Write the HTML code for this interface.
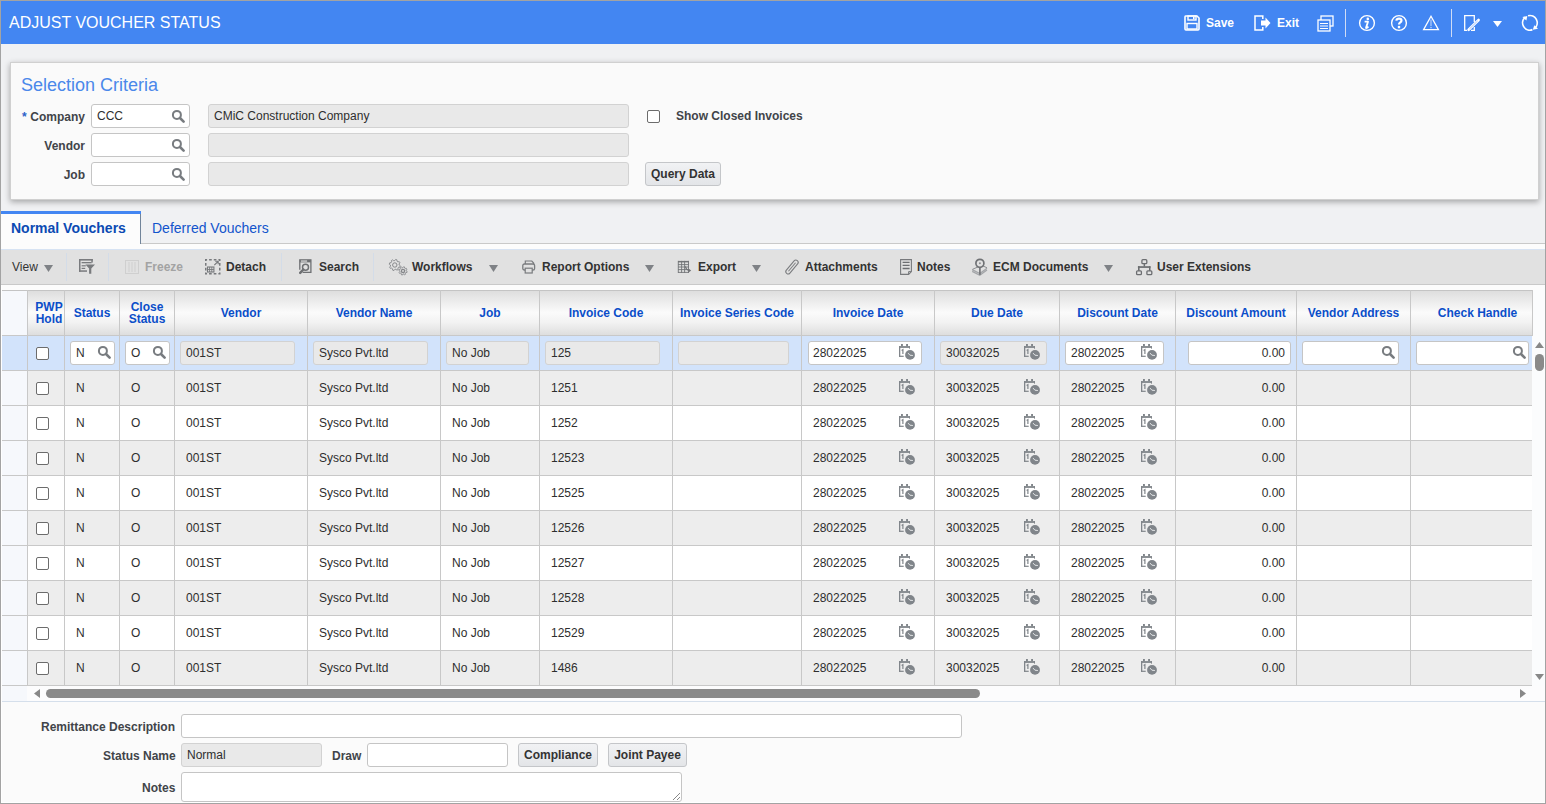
<!DOCTYPE html>
<html><head><meta charset="utf-8"><style>
*{box-sizing:border-box;margin:0;padding:0}
html,body{width:1546px;height:804px;overflow:hidden}
body{position:relative;background:#f0f1f3;font-family:"Liberation Sans",sans-serif;font-size:12px;color:#333}
div,span,svg{position:absolute}
.t{white-space:nowrap;line-height:14px}
.b{font-weight:bold}
.lbl{font-weight:bold;color:#414449;white-space:nowrap;line-height:14px}
.inp{background:#fff;border:1px solid #c5c5c5;border-radius:3px}
.ro{background:#e9e9e9;border:1px solid #d2d2d2;border-radius:3px}
.btn{background:linear-gradient(#f1f2f4,#e3e5e8);border:1px solid #c4c6c9;border-radius:3px;font-weight:bold;color:#333;text-align:center;white-space:nowrap}
.ht{font-weight:bold;color:#0b4ec9;text-align:center;line-height:14px;white-space:nowrap}
.cell{white-space:nowrap;line-height:14px;color:#2e2e2e}
</style></head><body>
<div style="left:0px;top:0px;width:1546px;height:1px;background:#a3a3a3"></div>
<div style="left:0px;top:0px;width:1px;height:804px;background:#a3a3a3"></div>
<div style="left:1545px;top:0px;width:1px;height:804px;background:#a3a3a3"></div>
<div style="left:0px;top:803px;width:1546px;height:1px;background:#a3a3a3"></div>
<div style="left:1px;top:1px;width:1544px;height:43px;background:#4386f2"></div>
<div class="t" style="left:9px;top:14px;font-size:16px;line-height:18px;color:#fff">ADJUST VOUCHER STATUS</div>
<svg style="left:1184px;top:15px" width="16" height="16" viewBox="0 0 16 16"><path d="M1.5 1 H13 L15 3 V14 Q15 15 14 15 H2 Q1 15 1 14 V2 Q1 1 1.5 1Z" fill="none" stroke="#fff" stroke-width="1.6"/><rect x="4" y="1" width="8" height="4" fill="none" stroke="#fff" stroke-width="1.4"/><rect x="9" y="2" width="1.6" height="2.2" fill="#fff"/><rect x="3" y="8.5" width="10" height="5.5" fill="none" stroke="#fff" stroke-width="1.4"/></svg>
<div class="t b" style="left:1206px;top:16px;font-size:12px;color:#fff">Save</div>
<svg style="left:1254px;top:15px" width="18" height="16" viewBox="0 0 18 16"><path d="M8.8 4 V1 H1 V15 H8.8 V12" fill="none" stroke="#fff" stroke-width="1.5"/><path d="M7 5.5 H11.5 V2.5 L16.5 8 L11.5 13.5 V10.5 H7Z" fill="#fff"/></svg>
<div class="t b" style="left:1277px;top:16px;font-size:12px;color:#fff">Exit</div>
<svg style="left:1317px;top:15px" width="17" height="17" viewBox="0 0 17 17"><rect x="4" y="1" width="12" height="10" fill="none" stroke="#fff" stroke-width="1.3"/><rect x="1" y="5" width="12" height="11" fill="#4386f2" stroke="#fff" stroke-width="1.3"/><path d="M3 8.5 H11 M3 11 H11 M3 13.5 H11" stroke="#fff" stroke-width="1.1"/></svg>
<div style="left:1345px;top:9px;width:1px;height:28px;background:#d0dcf5"></div>
<svg style="left:1358px;top:14px" width="18" height="18" viewBox="0 0 18 18"><circle cx="9" cy="9" r="7.4" fill="none" stroke="#fff" stroke-width="1.4"/><circle cx="9.8" cy="4.9" r="1.3" fill="#fff"/><path d="M6.6 7.7 H10 L8.1 13.6 Q7.9 14.3 8.6 14 L10.5 12.8" fill="none" stroke="#fff" stroke-width="1.8" stroke-linejoin="round"/></svg>
<svg style="left:1390px;top:14px" width="18" height="18" viewBox="0 0 18 18"><circle cx="9" cy="9" r="7.4" fill="none" stroke="#fff" stroke-width="1.4"/><path d="M6.3 6.6 Q6.6 4.6 9 4.6 Q11.5 4.6 11.5 6.5 Q11.5 7.7 10 8.6 Q9 9.2 9 10.6" fill="none" stroke="#fff" stroke-width="2.2"/><circle cx="9" cy="13.1" r="1.3" fill="#fff"/></svg>
<svg style="left:1422px;top:15px" width="18" height="16" viewBox="0 0 18 16"><path d="M9 1.3 L16.4 14.6 H1.6Z" fill="none" stroke="#fff" stroke-width="1.3" stroke-linejoin="miter"/><path d="M9 4.5 V11" stroke="rgba(255,255,255,.55)" stroke-width="1.3"/><circle cx="9" cy="12.6" r="0.8" fill="rgba(255,255,255,.6)"/></svg>
<div style="left:1451px;top:9px;width:1px;height:28px;background:#d0dcf5"></div>
<svg style="left:1464px;top:14px" width="17" height="18" viewBox="0 0 17 18"><path d="M10.3 8 V1.6 H0.7 V16.4 H3 M7 16.4 H10.3 V13" fill="none" stroke="#fff" stroke-width="1.3"/><path d="M4.6 15.8 L14.6 6" stroke="#fff" stroke-width="2.6" stroke-linecap="round"/><path d="M5.5 14.9 L13.7 6.9" stroke="#4386f2" stroke-width="0.5"/></svg>
<svg style="left:1493px;top:21px" width="9" height="6" viewBox="0 0 9 6"><path d="M0 0 H9 L4.5 6Z" fill="#fff"/></svg>
<svg style="left:1521px;top:14px" width="18" height="18" viewBox="0 0 18 18"><path d="M7.01 1.75 A7.3 7.3 0 0 1 13.59 14.39" fill="none" stroke="#fff" stroke-width="1.7"/><path d="M11.4 15.66 A7.3 7.3 0 0 1 4.41 3.05" fill="none" stroke="#fff" stroke-width="1.7"/><path d="M1.4 3 L6.3 2.1 L5.4 6.5Z" fill="#fff"/><path d="M17 14.7 L11.8 15.8 L13.3 11.2Z" fill="#fff"/></svg>
<div style="left:10px;top:62px;width:1529px;height:138px;background:#fafafa;border:1px solid #d0d0d0;box-shadow:0 2px 6px rgba(0,0,0,.32)"></div>
<div class="t" style="left:21px;top:75px;font-size:18px;line-height:20px;color:#4a88ea">Selection Criteria</div>
<div class="lbl" style="left:0px;width:85px;text-align:right;top:110px">Company</div>
<div class="lbl" style="left:22px;top:110px;color:#2a62c9">*</div>
<div class="inp" style="left:91px;top:104px;width:99px;height:24px;"></div>
<div class="cell" style="left:97px;top:109px;">CCC</div>
<svg style="left:171px;top:109px" width="14" height="14" viewBox="0 0 14 14"><circle cx="5.9" cy="5.9" r="4" fill="none" stroke="#787c80" stroke-width="2"/><path d="M9 9 L12.6 12.6" stroke="#787c80" stroke-width="2.6" stroke-linecap="round"/></svg>
<div class="ro" style="left:208px;top:104px;width:421px;height:24px;"></div>
<div class="cell" style="left:214px;top:109px;">CMiC Construction Company</div>
<div class="lbl" style="left:0px;width:85px;text-align:right;top:139px">Vendor</div>
<div class="inp" style="left:91px;top:133px;width:99px;height:24px;"></div>
<svg style="left:171px;top:138px" width="14" height="14" viewBox="0 0 14 14"><circle cx="5.9" cy="5.9" r="4" fill="none" stroke="#787c80" stroke-width="2"/><path d="M9 9 L12.6 12.6" stroke="#787c80" stroke-width="2.6" stroke-linecap="round"/></svg>
<div class="ro" style="left:208px;top:133px;width:421px;height:24px;"></div>
<div class="lbl" style="left:0px;width:85px;text-align:right;top:168px">Job</div>
<div class="inp" style="left:91px;top:162px;width:99px;height:24px;"></div>
<svg style="left:171px;top:167px" width="14" height="14" viewBox="0 0 14 14"><circle cx="5.9" cy="5.9" r="4" fill="none" stroke="#787c80" stroke-width="2"/><path d="M9 9 L12.6 12.6" stroke="#787c80" stroke-width="2.6" stroke-linecap="round"/></svg>
<div class="ro" style="left:208px;top:162px;width:421px;height:24px;"></div>
<div style="left:647px;top:110px;width:13px;height:13px;background:#fff;border:1px solid #6c6c6c;border-radius:2px"></div>
<div class="lbl" style="left:676px;top:109px;">Show Closed Invoices</div>
<div class="btn" style="left:645px;top:162px;width:76px;height:24px;"><span style="position:static;line-height:22px">Query Data</span></div>
<div style="left:1px;top:243px;width:1544px;height:1px;background:#c9c9c9"></div>
<div style="left:1px;top:211px;width:140px;height:33px;background:#fcfcfc;border-right:1px solid #71849a"></div>
<div style="left:1px;top:211px;width:140px;height:3px;background:#4386f2"></div>
<div class="t b" style="left:11px;top:220px;font-size:14px;line-height:16px;color:#0b4ab3">Normal Vouchers</div>
<div class="t" style="left:152px;top:220px;font-size:14px;line-height:16px;color:#1254cc">Deferred Vouchers</div>
<div style="left:1px;top:244px;width:1544px;height:46px;background:#fcfcfc"></div>
<div style="left:1px;top:249px;width:1544px;height:36px;background:#e1e1e1;border-top:1px solid #d7e3f3;border-bottom:1px solid #c9c9c9"></div>
<div style="left:66px;top:253px;width:1px;height:28px;background:#d3dce8"></div>
<div style="left:108px;top:253px;width:1px;height:28px;background:#d3dce8"></div>
<div style="left:281px;top:253px;width:1px;height:28px;background:#d3dce8"></div>
<div style="left:373px;top:253px;width:1px;height:28px;background:#d3dce8"></div>
<div class="t" style="left:12px;top:260px;font-size:12px;color:#333">View</div>
<svg style="left:44px;top:265px" width="9" height="7" viewBox="0 0 9 7"><path d="M0 0 H9 L4.5 7Z" fill="#7f8286"/></svg>
<svg style="left:79px;top:258px" width="17" height="17" viewBox="0 0 17 17"><g fill="#797b7e"><rect x="0" y="1" width="13.8" height="1.6"/><rect x="12.3" y="1" width="1.5" height="3.6"/><rect x="0" y="1" width="1.5" height="12.8"/><rect x="0" y="12.3" width="8" height="1.5"/><rect x="2.6" y="4" width="10" height="1.3"/><rect x="2.6" y="7.2" width="4.2" height="1.2"/><rect x="2.6" y="9.8" width="3.6" height="1.2"/><path d="M6.4 6.6 H16 L12.3 10.6 V15.7 H10.1 V10.6Z"/></g></svg>
<svg style="left:125px;top:260px" width="14" height="14" viewBox="0 0 14 14"><rect x="0.5" y="0.5" width="13" height="13" fill="none" stroke="#cfcfcf"/><path d="M4 2 V12 M7 2 V12 M10 2 V12" stroke="#cfcfcf" stroke-width="1"/></svg>
<div class="t b" style="left:145px;top:260px;font-size:12px;color:#a3a3a3">Freeze</div>
<svg style="left:205px;top:259px" width="16" height="16" viewBox="0 0 16 16"><rect x="0.75" y="0.75" width="14" height="14" fill="none" stroke="#77797c" stroke-width="1.5" stroke-dasharray="2.67,2" stroke-dashoffset="1.33"/><rect x="2.5" y="8" width="6.4" height="5" fill="none" stroke="#77797c" stroke-width="1.1"/><path d="M4.6 8 V13 M6.8 8 V13 M2.5 10.5 H8.9" stroke="#77797c" stroke-width="0.9"/><path d="M9.3 6.2 L13 2.5 M10.2 2.3 H13.2 V5.3" fill="none" stroke="#77797c" stroke-width="1.1"/></svg>
<div class="t b" style="left:226px;top:261px;font-size:12px;color:#333;margin-top:-1px">Detach</div>
<svg style="left:299px;top:259px" width="14" height="16" viewBox="0 0 14 16"><path d="M0.8 10.8 V0.8 H11.9 V13.3 H3.6" fill="none" stroke="#6e7073" stroke-width="1.3"/><rect x="0.8" y="0.8" width="11.1" height="2.6" fill="#6e7073"/><rect x="1.9" y="1.5" width="6.2" height="1.1" fill="#e6e6e6"/><circle cx="6.5" cy="8.3" r="3" fill="none" stroke="#6e7073" stroke-width="1.5"/><path d="M4.3 10.5 L1.2 13.9" stroke="#6e7073" stroke-width="2.4" stroke-linecap="round"/></svg>
<div class="t b" style="left:319px;top:261px;font-size:12px;color:#333;margin-top:-1px">Search</div>
<svg style="left:388px;top:258px" width="20" height="18" viewBox="0 0 20 18"><path d="M11.20 7.00 L12.34 7.79 L11.97 9.14 L10.59 9.24 L9.91 10.11 L10.16 11.48 L8.94 12.17 L7.89 11.26 L6.80 11.40 L6.01 12.54 L4.66 12.17 L4.56 10.79 L3.69 10.11 L2.32 10.36 L1.63 9.14 L2.54 8.09 L2.40 7.00 L1.26 6.21 L1.63 4.86 L3.01 4.76 L3.69 3.89 L3.44 2.52 L4.66 1.83 L5.71 2.74 L6.80 2.60 L7.59 1.46 L8.94 1.83 L9.04 3.21 L9.91 3.89 L11.28 3.64 L11.97 4.86 L11.06 5.91Z" fill="none" stroke="#85878a" stroke-width="0.9" stroke-linejoin="round"/><circle cx="6.8" cy="7" r="2.2" fill="none" stroke="#85878a" stroke-width="1"/><path d="M18.20 12.90 L19.16 13.49 L18.88 14.51 L17.75 14.53 L17.26 15.16 L17.52 16.26 L16.61 16.78 L15.80 16.00 L15.00 16.10 L14.41 17.06 L13.39 16.78 L13.37 15.65 L12.74 15.16 L11.64 15.42 L11.12 14.51 L11.90 13.70 L11.80 12.90 L10.84 12.31 L11.12 11.29 L12.25 11.27 L12.74 10.64 L12.48 9.54 L13.39 9.02 L14.20 9.80 L15.00 9.70 L15.59 8.74 L16.61 9.02 L16.63 10.15 L17.26 10.64 L18.36 10.38 L18.88 11.29 L18.10 12.10Z" fill="#e1e1e1" stroke="#85878a" stroke-width="0.9" stroke-linejoin="round"/><circle cx="15" cy="12.9" r="1.6" fill="none" stroke="#85878a" stroke-width="1.3"/></svg>
<div class="t b" style="left:412px;top:261px;font-size:12px;color:#333;margin-top:-1px">Workflows</div>
<svg style="left:489px;top:265px" width="9" height="7" viewBox="0 0 9 7"><path d="M0 0 H9 L4.5 7Z" fill="#7f8286"/></svg>
<svg style="left:522px;top:260px" width="14" height="14" viewBox="0 0 14 14"><path d="M3.3 4 V1 H9.8 L11.6 3 V4" fill="none" stroke="#797b7e" stroke-width="1.2"/><rect x="0.8" y="4" width="11.8" height="6" rx="1.6" fill="none" stroke="#797b7e" stroke-width="1.3"/><rect x="3.2" y="8.2" width="7" height="4.8" fill="#e1e1e1" stroke="#797b7e" stroke-width="1.2"/></svg>
<div class="t b" style="left:542px;top:261px;font-size:12px;color:#333;margin-top:-1px">Report Options</div>
<svg style="left:645px;top:265px" width="9" height="7" viewBox="0 0 9 7"><path d="M0 0 H9 L4.5 7Z" fill="#7f8286"/></svg>
<svg style="left:677px;top:260px" width="15" height="14" viewBox="0 0 15 14"><rect x="1" y="0.9" width="10.9" height="1.5" fill="#727477"/><path d="M1.3 0.9 V12.9 M4.6 0.9 V12.9 M7.6 0.9 V12.9 M11.5 0.9 V12.9 M1 4.6 H11.9 M1 7 H11.9 M1 9.6 H11.9 M1 12.4 H11.9" stroke="#727477" stroke-width="0.9"/><path d="M8.2 6.3 Q9 9.5 12.3 10.4" fill="none" stroke="#727477" stroke-width="1.2"/><path d="M11.4 8.4 L14.2 10.5 L11.6 12.6Z" fill="#727477"/></svg>
<div class="t b" style="left:698px;top:261px;font-size:12px;color:#333;margin-top:-1px">Export</div>
<svg style="left:752px;top:265px" width="9" height="7" viewBox="0 0 9 7"><path d="M0 0 H9 L4.5 7Z" fill="#7f8286"/></svg>
<svg style="left:784px;top:258px" width="16" height="18" viewBox="0 0 16 18"><g transform="translate(8,9) rotate(40)"><rect x="-2.3" y="-8.3" width="4.6" height="16.6" rx="2.3" fill="none" stroke="#7a7c7f" stroke-width="1.1"/><path d="M0 -5.5 V5.5" stroke="#7a7c7f" stroke-width="1"/></g></svg>
<div class="t b" style="left:805px;top:261px;font-size:12px;color:#333;margin-top:-1px">Attachments</div>
<svg style="left:900px;top:259px" width="13" height="17" viewBox="0 0 13 17"><path d="M0.6 0.6 H11.4 V12.6 L8.6 15.4 H0.6Z" fill="none" stroke="#77797c" stroke-width="1.1"/><path d="M2.6 3.3 H9.6 M2.6 6.4 H9.6 M2.6 9.5 H9.6" stroke="#6c6e71" stroke-width="1.3"/><path d="M11.4 12.6 H8.6 V15.4" fill="none" stroke="#77797c" stroke-width="1"/></svg>
<div class="t b" style="left:917px;top:261px;font-size:12px;color:#333;margin-top:-1px">Notes</div>
<svg style="left:971px;top:257px" width="17" height="19" viewBox="0 0 17 19"><path d="M1.2 12.6 L8.8 16.6 L16 11.2 M1.2 14.4 L8.8 18.2 L16 13.1" fill="none" stroke="#a3a5a8" stroke-width="1.2"/><path d="M1.5 12.3 L8 9.5 M16 10.8 L10 8" fill="none" stroke="#8c8e91" stroke-width="1"/><circle cx="8.9" cy="6.3" r="4" fill="#e1e1e1" stroke="#6f7174" stroke-width="1.7"/><circle cx="8.9" cy="6.3" r="1" fill="#8c8e91"/><rect x="8.1" y="10" width="1.6" height="7.8" fill="#6f7174"/></svg>
<div class="t b" style="left:993px;top:261px;font-size:12px;color:#333;margin-top:-1px">ECM Documents</div>
<svg style="left:1104px;top:265px" width="9" height="7" viewBox="0 0 9 7"><path d="M0 0 H9 L4.5 7Z" fill="#7f8286"/></svg>
<svg style="left:1135px;top:258px" width="18" height="18" viewBox="0 0 18 18"><g fill="none" stroke="#6c6e71" stroke-width="1.3"><rect x="6.9" y="1.7" width="4.9" height="4" rx="1"/><rect x="1.6" y="12.8" width="4.8" height="3.9" rx="1"/><rect x="11.9" y="12.8" width="4.9" height="3.9" rx="1"/></g><g fill="#6c6e71"><rect x="8.6" y="5.6" width="1.5" height="3"/><rect x="2.9" y="8.2" width="12.6" height="1.7"/><rect x="3" y="8.2" width="1.6" height="4.6"/><rect x="14" y="8.2" width="1.5" height="4.6"/></g></svg>
<div class="t b" style="left:1157px;top:261px;font-size:12px;color:#333;margin-top:-1px">User Extensions</div>
<div style="left:2px;top:290px;width:1531px;height:46px;background:linear-gradient(#dedede 0%,#fbfbfb 48%,#f2f2f2 70%,#dcdcdc 100%);border-top:1px solid #c4c4c4"></div>
<div style="left:2px;top:291px;width:25px;height:44px;background:#f6f8fc"></div>
<div style="left:27px;top:335px;width:1505px;height:35px;background:#d2e3fb"></div>
<div style="left:2px;top:335px;width:25px;height:35px;background:#d2e3fb"></div>
<div style="left:27px;top:370px;width:1505px;height:35px;background:#ededed"></div>
<div style="left:2px;top:370px;width:25px;height:35px;background:#f6f8fc"></div>
<div style="left:27px;top:405px;width:1505px;height:35px;background:#ffffff"></div>
<div style="left:2px;top:405px;width:25px;height:35px;background:#f6f8fc"></div>
<div style="left:27px;top:440px;width:1505px;height:35px;background:#ededed"></div>
<div style="left:2px;top:440px;width:25px;height:35px;background:#f6f8fc"></div>
<div style="left:27px;top:475px;width:1505px;height:35px;background:#ffffff"></div>
<div style="left:2px;top:475px;width:25px;height:35px;background:#f6f8fc"></div>
<div style="left:27px;top:510px;width:1505px;height:35px;background:#ededed"></div>
<div style="left:2px;top:510px;width:25px;height:35px;background:#f6f8fc"></div>
<div style="left:27px;top:545px;width:1505px;height:35px;background:#ffffff"></div>
<div style="left:2px;top:545px;width:25px;height:35px;background:#f6f8fc"></div>
<div style="left:27px;top:580px;width:1505px;height:35px;background:#ededed"></div>
<div style="left:2px;top:580px;width:25px;height:35px;background:#f6f8fc"></div>
<div style="left:27px;top:615px;width:1505px;height:35px;background:#ffffff"></div>
<div style="left:2px;top:615px;width:25px;height:35px;background:#f6f8fc"></div>
<div style="left:27px;top:650px;width:1505px;height:35px;background:#ededed"></div>
<div style="left:2px;top:650px;width:25px;height:35px;background:#f6f8fc"></div>
<div style="left:2px;top:335px;width:1530px;height:1px;background:#c8c8c8"></div>
<div style="left:2px;top:370px;width:1530px;height:1px;background:#c8c8c8"></div>
<div style="left:2px;top:405px;width:1530px;height:1px;background:#c8c8c8"></div>
<div style="left:2px;top:440px;width:1530px;height:1px;background:#c8c8c8"></div>
<div style="left:2px;top:475px;width:1530px;height:1px;background:#c8c8c8"></div>
<div style="left:2px;top:510px;width:1530px;height:1px;background:#c8c8c8"></div>
<div style="left:2px;top:545px;width:1530px;height:1px;background:#c8c8c8"></div>
<div style="left:2px;top:580px;width:1530px;height:1px;background:#c8c8c8"></div>
<div style="left:2px;top:615px;width:1530px;height:1px;background:#c8c8c8"></div>
<div style="left:2px;top:650px;width:1530px;height:1px;background:#c8c8c8"></div>
<div style="left:2px;top:685px;width:1530px;height:1px;background:#c8c8c8"></div>
<div style="left:27px;top:290px;width:1px;height:395px;background:#c8c8c8"></div>
<div style="left:64px;top:290px;width:1px;height:395px;background:#c8c8c8"></div>
<div style="left:119px;top:290px;width:1px;height:395px;background:#c8c8c8"></div>
<div style="left:174px;top:290px;width:1px;height:395px;background:#c8c8c8"></div>
<div style="left:307px;top:290px;width:1px;height:395px;background:#c8c8c8"></div>
<div style="left:440px;top:290px;width:1px;height:395px;background:#c8c8c8"></div>
<div style="left:539px;top:290px;width:1px;height:395px;background:#c8c8c8"></div>
<div style="left:672px;top:290px;width:1px;height:395px;background:#c8c8c8"></div>
<div style="left:801px;top:290px;width:1px;height:395px;background:#c8c8c8"></div>
<div style="left:934px;top:290px;width:1px;height:395px;background:#c8c8c8"></div>
<div style="left:1059px;top:290px;width:1px;height:395px;background:#c8c8c8"></div>
<div style="left:1175px;top:290px;width:1px;height:395px;background:#c8c8c8"></div>
<div style="left:1296px;top:290px;width:1px;height:395px;background:#c8c8c8"></div>
<div style="left:1410px;top:290px;width:1px;height:395px;background:#c8c8c8"></div>
<div style="left:1532px;top:290px;width:1px;height:46px;background:#c8c8c8"></div>
<div class="ht" style="left:31px;top:301px;width:36px;line-height:12px">PWP<br>Hold</div>
<div class="ht" style="left:65px;top:306px;width:54px">Status</div>
<div class="ht" style="left:120px;top:301px;width:54px;line-height:12px">Close<br>Status</div>
<div class="ht" style="left:175px;top:306px;width:132px">Vendor</div>
<div class="ht" style="left:308px;top:306px;width:132px">Vendor Name</div>
<div class="ht" style="left:441px;top:306px;width:98px">Job</div>
<div class="ht" style="left:540px;top:306px;width:132px">Invoice Code</div>
<div class="ht" style="left:673px;top:306px;width:128px">Invoice Series Code</div>
<div class="ht" style="left:802px;top:306px;width:132px">Invoice Date</div>
<div class="ht" style="left:935px;top:306px;width:124px">Due Date</div>
<div class="ht" style="left:1060px;top:306px;width:115px">Discount Date</div>
<div class="ht" style="left:1176px;top:306px;width:120px">Discount Amount</div>
<div class="ht" style="left:1297px;top:306px;width:113px">Vendor Address</div>
<div class="ht" style="left:1417px;top:306px;width:121px">Check Handle</div>
<div style="left:36px;top:347px;width:13px;height:13px;background:#fff;border:1px solid #6c6c6c;border-radius:2px"></div>
<div class="inp" style="left:70px;top:341px;width:45px;height:24px;"></div>
<div class="cell" style="left:76px;top:346px;">N</div>
<svg style="left:97px;top:345px" width="14" height="14" viewBox="0 0 14 14"><circle cx="5.9" cy="5.9" r="4" fill="none" stroke="#787c80" stroke-width="2"/><path d="M9 9 L12.6 12.6" stroke="#787c80" stroke-width="2.6" stroke-linecap="round"/></svg>
<div class="inp" style="left:125px;top:341px;width:45px;height:24px;"></div>
<div class="cell" style="left:131px;top:346px;">O</div>
<svg style="left:152px;top:345px" width="14" height="14" viewBox="0 0 14 14"><circle cx="5.9" cy="5.9" r="4" fill="none" stroke="#787c80" stroke-width="2"/><path d="M9 9 L12.6 12.6" stroke="#787c80" stroke-width="2.6" stroke-linecap="round"/></svg>
<div class="ro" style="left:180px;top:341px;width:115px;height:24px;"></div>
<div class="cell" style="left:186px;top:346px;">001ST</div>
<div class="ro" style="left:313px;top:341px;width:115px;height:24px;"></div>
<div class="cell" style="left:319px;top:346px;">Sysco Pvt.ltd</div>
<div class="ro" style="left:446px;top:341px;width:83px;height:24px;"></div>
<div class="cell" style="left:452px;top:346px;">No Job</div>
<div class="ro" style="left:545px;top:341px;width:115px;height:24px;"></div>
<div class="cell" style="left:551px;top:346px;">125</div>
<div class="ro" style="left:678px;top:341px;width:111px;height:24px;"></div>
<div class="inp" style="left:808px;top:341px;width:114px;height:24px;"></div>
<div class="cell" style="left:813px;top:346px;">28022025</div>
<svg style="left:898px;top:343px" width="17" height="17" viewBox="0 0 17 17"><rect x="1" y="3.1" width="10.9" height="1.8" fill="#80858a"/><rect x="1" y="3.1" width="1.3" height="10.8" fill="#80858a"/><rect x="11.1" y="3.1" width="0.9" height="2.6" fill="#80858a"/><rect x="3" y="1" width="1.9" height="2.3" fill="#80858a"/><rect x="8.1" y="1" width="1.9" height="2.3" fill="#80858a"/><rect x="1" y="12.7" width="4.7" height="1.2" fill="#80858a"/><path d="M3.6 7.4 L4.9 6.6 V11" fill="none" stroke="#80858a" stroke-width="1.2"/><circle cx="12" cy="11.9" r="4.9" fill="#80858a"/><path d="M10.1 10.1 L11.9 12.2 L14.9 12.5" fill="none" stroke="#eef0f2" stroke-width="0.9"/></svg>
<div class="ro" style="left:940px;top:341px;width:107px;height:24px;"></div>
<div class="cell" style="left:946px;top:346px;">30032025</div>
<svg style="left:1023px;top:343px" width="17" height="17" viewBox="0 0 17 17"><rect x="1" y="3.1" width="10.9" height="1.8" fill="#80858a"/><rect x="1" y="3.1" width="1.3" height="10.8" fill="#80858a"/><rect x="11.1" y="3.1" width="0.9" height="2.6" fill="#80858a"/><rect x="3" y="1" width="1.9" height="2.3" fill="#80858a"/><rect x="8.1" y="1" width="1.9" height="2.3" fill="#80858a"/><rect x="1" y="12.7" width="4.7" height="1.2" fill="#80858a"/><path d="M3.6 7.4 L4.9 6.6 V11" fill="none" stroke="#80858a" stroke-width="1.2"/><circle cx="12" cy="11.9" r="4.9" fill="#80858a"/><path d="M10.1 10.1 L11.9 12.2 L14.9 12.5" fill="none" stroke="#eef0f2" stroke-width="0.9"/></svg>
<div class="inp" style="left:1065px;top:341px;width:99px;height:24px;"></div>
<div class="cell" style="left:1071px;top:346px;">28022025</div>
<svg style="left:1140px;top:343px" width="17" height="17" viewBox="0 0 17 17"><rect x="1" y="3.1" width="10.9" height="1.8" fill="#80858a"/><rect x="1" y="3.1" width="1.3" height="10.8" fill="#80858a"/><rect x="11.1" y="3.1" width="0.9" height="2.6" fill="#80858a"/><rect x="3" y="1" width="1.9" height="2.3" fill="#80858a"/><rect x="8.1" y="1" width="1.9" height="2.3" fill="#80858a"/><rect x="1" y="12.7" width="4.7" height="1.2" fill="#80858a"/><path d="M3.6 7.4 L4.9 6.6 V11" fill="none" stroke="#80858a" stroke-width="1.2"/><circle cx="12" cy="11.9" r="4.9" fill="#80858a"/><path d="M10.1 10.1 L11.9 12.2 L14.9 12.5" fill="none" stroke="#eef0f2" stroke-width="0.9"/></svg>
<div class="inp" style="left:1188px;top:341px;width:103px;height:24px;"></div>
<div class="cell" style="left:1188px;top:346px;width:97px;text-align:right">0.00</div>
<div class="inp" style="left:1302px;top:341px;width:97px;height:24px;"></div>
<svg style="left:1381px;top:345px" width="14" height="14" viewBox="0 0 14 14"><circle cx="5.9" cy="5.9" r="4" fill="none" stroke="#787c80" stroke-width="2"/><path d="M9 9 L12.6 12.6" stroke="#787c80" stroke-width="2.6" stroke-linecap="round"/></svg>
<div class="inp" style="left:1416px;top:341px;width:113px;height:24px;"></div>
<svg style="left:1512px;top:345px" width="14" height="14" viewBox="0 0 14 14"><circle cx="5.9" cy="5.9" r="4" fill="none" stroke="#787c80" stroke-width="2"/><path d="M9 9 L12.6 12.6" stroke="#787c80" stroke-width="2.6" stroke-linecap="round"/></svg>
<div style="left:36px;top:382px;width:13px;height:13px;background:#fff;border:1px solid #6c6c6c;border-radius:2px"></div>
<div class="cell" style="left:76px;top:381px;">N</div>
<div class="cell" style="left:131px;top:381px;">O</div>
<div class="cell" style="left:186px;top:381px;">001ST</div>
<div class="cell" style="left:319px;top:381px;">Sysco Pvt.ltd</div>
<div class="cell" style="left:452px;top:381px;">No Job</div>
<div class="cell" style="left:551px;top:381px;">1251</div>
<div class="cell" style="left:813px;top:381px;">28022025</div>
<svg style="left:898px;top:378px" width="17" height="17" viewBox="0 0 17 17"><rect x="1" y="3.1" width="10.9" height="1.8" fill="#80858a"/><rect x="1" y="3.1" width="1.3" height="10.8" fill="#80858a"/><rect x="11.1" y="3.1" width="0.9" height="2.6" fill="#80858a"/><rect x="3" y="1" width="1.9" height="2.3" fill="#80858a"/><rect x="8.1" y="1" width="1.9" height="2.3" fill="#80858a"/><rect x="1" y="12.7" width="4.7" height="1.2" fill="#80858a"/><path d="M3.6 7.4 L4.9 6.6 V11" fill="none" stroke="#80858a" stroke-width="1.2"/><circle cx="12" cy="11.9" r="4.9" fill="#80858a"/><path d="M10.1 10.1 L11.9 12.2 L14.9 12.5" fill="none" stroke="#eef0f2" stroke-width="0.9"/></svg>
<div class="cell" style="left:946px;top:381px;">30032025</div>
<svg style="left:1023px;top:378px" width="17" height="17" viewBox="0 0 17 17"><rect x="1" y="3.1" width="10.9" height="1.8" fill="#80858a"/><rect x="1" y="3.1" width="1.3" height="10.8" fill="#80858a"/><rect x="11.1" y="3.1" width="0.9" height="2.6" fill="#80858a"/><rect x="3" y="1" width="1.9" height="2.3" fill="#80858a"/><rect x="8.1" y="1" width="1.9" height="2.3" fill="#80858a"/><rect x="1" y="12.7" width="4.7" height="1.2" fill="#80858a"/><path d="M3.6 7.4 L4.9 6.6 V11" fill="none" stroke="#80858a" stroke-width="1.2"/><circle cx="12" cy="11.9" r="4.9" fill="#80858a"/><path d="M10.1 10.1 L11.9 12.2 L14.9 12.5" fill="none" stroke="#eef0f2" stroke-width="0.9"/></svg>
<div class="cell" style="left:1071px;top:381px;">28022025</div>
<svg style="left:1140px;top:378px" width="17" height="17" viewBox="0 0 17 17"><rect x="1" y="3.1" width="10.9" height="1.8" fill="#80858a"/><rect x="1" y="3.1" width="1.3" height="10.8" fill="#80858a"/><rect x="11.1" y="3.1" width="0.9" height="2.6" fill="#80858a"/><rect x="3" y="1" width="1.9" height="2.3" fill="#80858a"/><rect x="8.1" y="1" width="1.9" height="2.3" fill="#80858a"/><rect x="1" y="12.7" width="4.7" height="1.2" fill="#80858a"/><path d="M3.6 7.4 L4.9 6.6 V11" fill="none" stroke="#80858a" stroke-width="1.2"/><circle cx="12" cy="11.9" r="4.9" fill="#80858a"/><path d="M10.1 10.1 L11.9 12.2 L14.9 12.5" fill="none" stroke="#eef0f2" stroke-width="0.9"/></svg>
<div class="cell" style="left:1188px;top:381px;width:97px;text-align:right">0.00</div>
<div style="left:36px;top:417px;width:13px;height:13px;background:#fff;border:1px solid #6c6c6c;border-radius:2px"></div>
<div class="cell" style="left:76px;top:416px;">N</div>
<div class="cell" style="left:131px;top:416px;">O</div>
<div class="cell" style="left:186px;top:416px;">001ST</div>
<div class="cell" style="left:319px;top:416px;">Sysco Pvt.ltd</div>
<div class="cell" style="left:452px;top:416px;">No Job</div>
<div class="cell" style="left:551px;top:416px;">1252</div>
<div class="cell" style="left:813px;top:416px;">28022025</div>
<svg style="left:898px;top:413px" width="17" height="17" viewBox="0 0 17 17"><rect x="1" y="3.1" width="10.9" height="1.8" fill="#80858a"/><rect x="1" y="3.1" width="1.3" height="10.8" fill="#80858a"/><rect x="11.1" y="3.1" width="0.9" height="2.6" fill="#80858a"/><rect x="3" y="1" width="1.9" height="2.3" fill="#80858a"/><rect x="8.1" y="1" width="1.9" height="2.3" fill="#80858a"/><rect x="1" y="12.7" width="4.7" height="1.2" fill="#80858a"/><path d="M3.6 7.4 L4.9 6.6 V11" fill="none" stroke="#80858a" stroke-width="1.2"/><circle cx="12" cy="11.9" r="4.9" fill="#80858a"/><path d="M10.1 10.1 L11.9 12.2 L14.9 12.5" fill="none" stroke="#eef0f2" stroke-width="0.9"/></svg>
<div class="cell" style="left:946px;top:416px;">30032025</div>
<svg style="left:1023px;top:413px" width="17" height="17" viewBox="0 0 17 17"><rect x="1" y="3.1" width="10.9" height="1.8" fill="#80858a"/><rect x="1" y="3.1" width="1.3" height="10.8" fill="#80858a"/><rect x="11.1" y="3.1" width="0.9" height="2.6" fill="#80858a"/><rect x="3" y="1" width="1.9" height="2.3" fill="#80858a"/><rect x="8.1" y="1" width="1.9" height="2.3" fill="#80858a"/><rect x="1" y="12.7" width="4.7" height="1.2" fill="#80858a"/><path d="M3.6 7.4 L4.9 6.6 V11" fill="none" stroke="#80858a" stroke-width="1.2"/><circle cx="12" cy="11.9" r="4.9" fill="#80858a"/><path d="M10.1 10.1 L11.9 12.2 L14.9 12.5" fill="none" stroke="#eef0f2" stroke-width="0.9"/></svg>
<div class="cell" style="left:1071px;top:416px;">28022025</div>
<svg style="left:1140px;top:413px" width="17" height="17" viewBox="0 0 17 17"><rect x="1" y="3.1" width="10.9" height="1.8" fill="#80858a"/><rect x="1" y="3.1" width="1.3" height="10.8" fill="#80858a"/><rect x="11.1" y="3.1" width="0.9" height="2.6" fill="#80858a"/><rect x="3" y="1" width="1.9" height="2.3" fill="#80858a"/><rect x="8.1" y="1" width="1.9" height="2.3" fill="#80858a"/><rect x="1" y="12.7" width="4.7" height="1.2" fill="#80858a"/><path d="M3.6 7.4 L4.9 6.6 V11" fill="none" stroke="#80858a" stroke-width="1.2"/><circle cx="12" cy="11.9" r="4.9" fill="#80858a"/><path d="M10.1 10.1 L11.9 12.2 L14.9 12.5" fill="none" stroke="#eef0f2" stroke-width="0.9"/></svg>
<div class="cell" style="left:1188px;top:416px;width:97px;text-align:right">0.00</div>
<div style="left:36px;top:452px;width:13px;height:13px;background:#fff;border:1px solid #6c6c6c;border-radius:2px"></div>
<div class="cell" style="left:76px;top:451px;">N</div>
<div class="cell" style="left:131px;top:451px;">O</div>
<div class="cell" style="left:186px;top:451px;">001ST</div>
<div class="cell" style="left:319px;top:451px;">Sysco Pvt.ltd</div>
<div class="cell" style="left:452px;top:451px;">No Job</div>
<div class="cell" style="left:551px;top:451px;">12523</div>
<div class="cell" style="left:813px;top:451px;">28022025</div>
<svg style="left:898px;top:448px" width="17" height="17" viewBox="0 0 17 17"><rect x="1" y="3.1" width="10.9" height="1.8" fill="#80858a"/><rect x="1" y="3.1" width="1.3" height="10.8" fill="#80858a"/><rect x="11.1" y="3.1" width="0.9" height="2.6" fill="#80858a"/><rect x="3" y="1" width="1.9" height="2.3" fill="#80858a"/><rect x="8.1" y="1" width="1.9" height="2.3" fill="#80858a"/><rect x="1" y="12.7" width="4.7" height="1.2" fill="#80858a"/><path d="M3.6 7.4 L4.9 6.6 V11" fill="none" stroke="#80858a" stroke-width="1.2"/><circle cx="12" cy="11.9" r="4.9" fill="#80858a"/><path d="M10.1 10.1 L11.9 12.2 L14.9 12.5" fill="none" stroke="#eef0f2" stroke-width="0.9"/></svg>
<div class="cell" style="left:946px;top:451px;">30032025</div>
<svg style="left:1023px;top:448px" width="17" height="17" viewBox="0 0 17 17"><rect x="1" y="3.1" width="10.9" height="1.8" fill="#80858a"/><rect x="1" y="3.1" width="1.3" height="10.8" fill="#80858a"/><rect x="11.1" y="3.1" width="0.9" height="2.6" fill="#80858a"/><rect x="3" y="1" width="1.9" height="2.3" fill="#80858a"/><rect x="8.1" y="1" width="1.9" height="2.3" fill="#80858a"/><rect x="1" y="12.7" width="4.7" height="1.2" fill="#80858a"/><path d="M3.6 7.4 L4.9 6.6 V11" fill="none" stroke="#80858a" stroke-width="1.2"/><circle cx="12" cy="11.9" r="4.9" fill="#80858a"/><path d="M10.1 10.1 L11.9 12.2 L14.9 12.5" fill="none" stroke="#eef0f2" stroke-width="0.9"/></svg>
<div class="cell" style="left:1071px;top:451px;">28022025</div>
<svg style="left:1140px;top:448px" width="17" height="17" viewBox="0 0 17 17"><rect x="1" y="3.1" width="10.9" height="1.8" fill="#80858a"/><rect x="1" y="3.1" width="1.3" height="10.8" fill="#80858a"/><rect x="11.1" y="3.1" width="0.9" height="2.6" fill="#80858a"/><rect x="3" y="1" width="1.9" height="2.3" fill="#80858a"/><rect x="8.1" y="1" width="1.9" height="2.3" fill="#80858a"/><rect x="1" y="12.7" width="4.7" height="1.2" fill="#80858a"/><path d="M3.6 7.4 L4.9 6.6 V11" fill="none" stroke="#80858a" stroke-width="1.2"/><circle cx="12" cy="11.9" r="4.9" fill="#80858a"/><path d="M10.1 10.1 L11.9 12.2 L14.9 12.5" fill="none" stroke="#eef0f2" stroke-width="0.9"/></svg>
<div class="cell" style="left:1188px;top:451px;width:97px;text-align:right">0.00</div>
<div style="left:36px;top:487px;width:13px;height:13px;background:#fff;border:1px solid #6c6c6c;border-radius:2px"></div>
<div class="cell" style="left:76px;top:486px;">N</div>
<div class="cell" style="left:131px;top:486px;">O</div>
<div class="cell" style="left:186px;top:486px;">001ST</div>
<div class="cell" style="left:319px;top:486px;">Sysco Pvt.ltd</div>
<div class="cell" style="left:452px;top:486px;">No Job</div>
<div class="cell" style="left:551px;top:486px;">12525</div>
<div class="cell" style="left:813px;top:486px;">28022025</div>
<svg style="left:898px;top:483px" width="17" height="17" viewBox="0 0 17 17"><rect x="1" y="3.1" width="10.9" height="1.8" fill="#80858a"/><rect x="1" y="3.1" width="1.3" height="10.8" fill="#80858a"/><rect x="11.1" y="3.1" width="0.9" height="2.6" fill="#80858a"/><rect x="3" y="1" width="1.9" height="2.3" fill="#80858a"/><rect x="8.1" y="1" width="1.9" height="2.3" fill="#80858a"/><rect x="1" y="12.7" width="4.7" height="1.2" fill="#80858a"/><path d="M3.6 7.4 L4.9 6.6 V11" fill="none" stroke="#80858a" stroke-width="1.2"/><circle cx="12" cy="11.9" r="4.9" fill="#80858a"/><path d="M10.1 10.1 L11.9 12.2 L14.9 12.5" fill="none" stroke="#eef0f2" stroke-width="0.9"/></svg>
<div class="cell" style="left:946px;top:486px;">30032025</div>
<svg style="left:1023px;top:483px" width="17" height="17" viewBox="0 0 17 17"><rect x="1" y="3.1" width="10.9" height="1.8" fill="#80858a"/><rect x="1" y="3.1" width="1.3" height="10.8" fill="#80858a"/><rect x="11.1" y="3.1" width="0.9" height="2.6" fill="#80858a"/><rect x="3" y="1" width="1.9" height="2.3" fill="#80858a"/><rect x="8.1" y="1" width="1.9" height="2.3" fill="#80858a"/><rect x="1" y="12.7" width="4.7" height="1.2" fill="#80858a"/><path d="M3.6 7.4 L4.9 6.6 V11" fill="none" stroke="#80858a" stroke-width="1.2"/><circle cx="12" cy="11.9" r="4.9" fill="#80858a"/><path d="M10.1 10.1 L11.9 12.2 L14.9 12.5" fill="none" stroke="#eef0f2" stroke-width="0.9"/></svg>
<div class="cell" style="left:1071px;top:486px;">28022025</div>
<svg style="left:1140px;top:483px" width="17" height="17" viewBox="0 0 17 17"><rect x="1" y="3.1" width="10.9" height="1.8" fill="#80858a"/><rect x="1" y="3.1" width="1.3" height="10.8" fill="#80858a"/><rect x="11.1" y="3.1" width="0.9" height="2.6" fill="#80858a"/><rect x="3" y="1" width="1.9" height="2.3" fill="#80858a"/><rect x="8.1" y="1" width="1.9" height="2.3" fill="#80858a"/><rect x="1" y="12.7" width="4.7" height="1.2" fill="#80858a"/><path d="M3.6 7.4 L4.9 6.6 V11" fill="none" stroke="#80858a" stroke-width="1.2"/><circle cx="12" cy="11.9" r="4.9" fill="#80858a"/><path d="M10.1 10.1 L11.9 12.2 L14.9 12.5" fill="none" stroke="#eef0f2" stroke-width="0.9"/></svg>
<div class="cell" style="left:1188px;top:486px;width:97px;text-align:right">0.00</div>
<div style="left:36px;top:522px;width:13px;height:13px;background:#fff;border:1px solid #6c6c6c;border-radius:2px"></div>
<div class="cell" style="left:76px;top:521px;">N</div>
<div class="cell" style="left:131px;top:521px;">O</div>
<div class="cell" style="left:186px;top:521px;">001ST</div>
<div class="cell" style="left:319px;top:521px;">Sysco Pvt.ltd</div>
<div class="cell" style="left:452px;top:521px;">No Job</div>
<div class="cell" style="left:551px;top:521px;">12526</div>
<div class="cell" style="left:813px;top:521px;">28022025</div>
<svg style="left:898px;top:518px" width="17" height="17" viewBox="0 0 17 17"><rect x="1" y="3.1" width="10.9" height="1.8" fill="#80858a"/><rect x="1" y="3.1" width="1.3" height="10.8" fill="#80858a"/><rect x="11.1" y="3.1" width="0.9" height="2.6" fill="#80858a"/><rect x="3" y="1" width="1.9" height="2.3" fill="#80858a"/><rect x="8.1" y="1" width="1.9" height="2.3" fill="#80858a"/><rect x="1" y="12.7" width="4.7" height="1.2" fill="#80858a"/><path d="M3.6 7.4 L4.9 6.6 V11" fill="none" stroke="#80858a" stroke-width="1.2"/><circle cx="12" cy="11.9" r="4.9" fill="#80858a"/><path d="M10.1 10.1 L11.9 12.2 L14.9 12.5" fill="none" stroke="#eef0f2" stroke-width="0.9"/></svg>
<div class="cell" style="left:946px;top:521px;">30032025</div>
<svg style="left:1023px;top:518px" width="17" height="17" viewBox="0 0 17 17"><rect x="1" y="3.1" width="10.9" height="1.8" fill="#80858a"/><rect x="1" y="3.1" width="1.3" height="10.8" fill="#80858a"/><rect x="11.1" y="3.1" width="0.9" height="2.6" fill="#80858a"/><rect x="3" y="1" width="1.9" height="2.3" fill="#80858a"/><rect x="8.1" y="1" width="1.9" height="2.3" fill="#80858a"/><rect x="1" y="12.7" width="4.7" height="1.2" fill="#80858a"/><path d="M3.6 7.4 L4.9 6.6 V11" fill="none" stroke="#80858a" stroke-width="1.2"/><circle cx="12" cy="11.9" r="4.9" fill="#80858a"/><path d="M10.1 10.1 L11.9 12.2 L14.9 12.5" fill="none" stroke="#eef0f2" stroke-width="0.9"/></svg>
<div class="cell" style="left:1071px;top:521px;">28022025</div>
<svg style="left:1140px;top:518px" width="17" height="17" viewBox="0 0 17 17"><rect x="1" y="3.1" width="10.9" height="1.8" fill="#80858a"/><rect x="1" y="3.1" width="1.3" height="10.8" fill="#80858a"/><rect x="11.1" y="3.1" width="0.9" height="2.6" fill="#80858a"/><rect x="3" y="1" width="1.9" height="2.3" fill="#80858a"/><rect x="8.1" y="1" width="1.9" height="2.3" fill="#80858a"/><rect x="1" y="12.7" width="4.7" height="1.2" fill="#80858a"/><path d="M3.6 7.4 L4.9 6.6 V11" fill="none" stroke="#80858a" stroke-width="1.2"/><circle cx="12" cy="11.9" r="4.9" fill="#80858a"/><path d="M10.1 10.1 L11.9 12.2 L14.9 12.5" fill="none" stroke="#eef0f2" stroke-width="0.9"/></svg>
<div class="cell" style="left:1188px;top:521px;width:97px;text-align:right">0.00</div>
<div style="left:36px;top:557px;width:13px;height:13px;background:#fff;border:1px solid #6c6c6c;border-radius:2px"></div>
<div class="cell" style="left:76px;top:556px;">N</div>
<div class="cell" style="left:131px;top:556px;">O</div>
<div class="cell" style="left:186px;top:556px;">001ST</div>
<div class="cell" style="left:319px;top:556px;">Sysco Pvt.ltd</div>
<div class="cell" style="left:452px;top:556px;">No Job</div>
<div class="cell" style="left:551px;top:556px;">12527</div>
<div class="cell" style="left:813px;top:556px;">28022025</div>
<svg style="left:898px;top:553px" width="17" height="17" viewBox="0 0 17 17"><rect x="1" y="3.1" width="10.9" height="1.8" fill="#80858a"/><rect x="1" y="3.1" width="1.3" height="10.8" fill="#80858a"/><rect x="11.1" y="3.1" width="0.9" height="2.6" fill="#80858a"/><rect x="3" y="1" width="1.9" height="2.3" fill="#80858a"/><rect x="8.1" y="1" width="1.9" height="2.3" fill="#80858a"/><rect x="1" y="12.7" width="4.7" height="1.2" fill="#80858a"/><path d="M3.6 7.4 L4.9 6.6 V11" fill="none" stroke="#80858a" stroke-width="1.2"/><circle cx="12" cy="11.9" r="4.9" fill="#80858a"/><path d="M10.1 10.1 L11.9 12.2 L14.9 12.5" fill="none" stroke="#eef0f2" stroke-width="0.9"/></svg>
<div class="cell" style="left:946px;top:556px;">30032025</div>
<svg style="left:1023px;top:553px" width="17" height="17" viewBox="0 0 17 17"><rect x="1" y="3.1" width="10.9" height="1.8" fill="#80858a"/><rect x="1" y="3.1" width="1.3" height="10.8" fill="#80858a"/><rect x="11.1" y="3.1" width="0.9" height="2.6" fill="#80858a"/><rect x="3" y="1" width="1.9" height="2.3" fill="#80858a"/><rect x="8.1" y="1" width="1.9" height="2.3" fill="#80858a"/><rect x="1" y="12.7" width="4.7" height="1.2" fill="#80858a"/><path d="M3.6 7.4 L4.9 6.6 V11" fill="none" stroke="#80858a" stroke-width="1.2"/><circle cx="12" cy="11.9" r="4.9" fill="#80858a"/><path d="M10.1 10.1 L11.9 12.2 L14.9 12.5" fill="none" stroke="#eef0f2" stroke-width="0.9"/></svg>
<div class="cell" style="left:1071px;top:556px;">28022025</div>
<svg style="left:1140px;top:553px" width="17" height="17" viewBox="0 0 17 17"><rect x="1" y="3.1" width="10.9" height="1.8" fill="#80858a"/><rect x="1" y="3.1" width="1.3" height="10.8" fill="#80858a"/><rect x="11.1" y="3.1" width="0.9" height="2.6" fill="#80858a"/><rect x="3" y="1" width="1.9" height="2.3" fill="#80858a"/><rect x="8.1" y="1" width="1.9" height="2.3" fill="#80858a"/><rect x="1" y="12.7" width="4.7" height="1.2" fill="#80858a"/><path d="M3.6 7.4 L4.9 6.6 V11" fill="none" stroke="#80858a" stroke-width="1.2"/><circle cx="12" cy="11.9" r="4.9" fill="#80858a"/><path d="M10.1 10.1 L11.9 12.2 L14.9 12.5" fill="none" stroke="#eef0f2" stroke-width="0.9"/></svg>
<div class="cell" style="left:1188px;top:556px;width:97px;text-align:right">0.00</div>
<div style="left:36px;top:592px;width:13px;height:13px;background:#fff;border:1px solid #6c6c6c;border-radius:2px"></div>
<div class="cell" style="left:76px;top:591px;">N</div>
<div class="cell" style="left:131px;top:591px;">O</div>
<div class="cell" style="left:186px;top:591px;">001ST</div>
<div class="cell" style="left:319px;top:591px;">Sysco Pvt.ltd</div>
<div class="cell" style="left:452px;top:591px;">No Job</div>
<div class="cell" style="left:551px;top:591px;">12528</div>
<div class="cell" style="left:813px;top:591px;">28022025</div>
<svg style="left:898px;top:588px" width="17" height="17" viewBox="0 0 17 17"><rect x="1" y="3.1" width="10.9" height="1.8" fill="#80858a"/><rect x="1" y="3.1" width="1.3" height="10.8" fill="#80858a"/><rect x="11.1" y="3.1" width="0.9" height="2.6" fill="#80858a"/><rect x="3" y="1" width="1.9" height="2.3" fill="#80858a"/><rect x="8.1" y="1" width="1.9" height="2.3" fill="#80858a"/><rect x="1" y="12.7" width="4.7" height="1.2" fill="#80858a"/><path d="M3.6 7.4 L4.9 6.6 V11" fill="none" stroke="#80858a" stroke-width="1.2"/><circle cx="12" cy="11.9" r="4.9" fill="#80858a"/><path d="M10.1 10.1 L11.9 12.2 L14.9 12.5" fill="none" stroke="#eef0f2" stroke-width="0.9"/></svg>
<div class="cell" style="left:946px;top:591px;">30032025</div>
<svg style="left:1023px;top:588px" width="17" height="17" viewBox="0 0 17 17"><rect x="1" y="3.1" width="10.9" height="1.8" fill="#80858a"/><rect x="1" y="3.1" width="1.3" height="10.8" fill="#80858a"/><rect x="11.1" y="3.1" width="0.9" height="2.6" fill="#80858a"/><rect x="3" y="1" width="1.9" height="2.3" fill="#80858a"/><rect x="8.1" y="1" width="1.9" height="2.3" fill="#80858a"/><rect x="1" y="12.7" width="4.7" height="1.2" fill="#80858a"/><path d="M3.6 7.4 L4.9 6.6 V11" fill="none" stroke="#80858a" stroke-width="1.2"/><circle cx="12" cy="11.9" r="4.9" fill="#80858a"/><path d="M10.1 10.1 L11.9 12.2 L14.9 12.5" fill="none" stroke="#eef0f2" stroke-width="0.9"/></svg>
<div class="cell" style="left:1071px;top:591px;">28022025</div>
<svg style="left:1140px;top:588px" width="17" height="17" viewBox="0 0 17 17"><rect x="1" y="3.1" width="10.9" height="1.8" fill="#80858a"/><rect x="1" y="3.1" width="1.3" height="10.8" fill="#80858a"/><rect x="11.1" y="3.1" width="0.9" height="2.6" fill="#80858a"/><rect x="3" y="1" width="1.9" height="2.3" fill="#80858a"/><rect x="8.1" y="1" width="1.9" height="2.3" fill="#80858a"/><rect x="1" y="12.7" width="4.7" height="1.2" fill="#80858a"/><path d="M3.6 7.4 L4.9 6.6 V11" fill="none" stroke="#80858a" stroke-width="1.2"/><circle cx="12" cy="11.9" r="4.9" fill="#80858a"/><path d="M10.1 10.1 L11.9 12.2 L14.9 12.5" fill="none" stroke="#eef0f2" stroke-width="0.9"/></svg>
<div class="cell" style="left:1188px;top:591px;width:97px;text-align:right">0.00</div>
<div style="left:36px;top:627px;width:13px;height:13px;background:#fff;border:1px solid #6c6c6c;border-radius:2px"></div>
<div class="cell" style="left:76px;top:626px;">N</div>
<div class="cell" style="left:131px;top:626px;">O</div>
<div class="cell" style="left:186px;top:626px;">001ST</div>
<div class="cell" style="left:319px;top:626px;">Sysco Pvt.ltd</div>
<div class="cell" style="left:452px;top:626px;">No Job</div>
<div class="cell" style="left:551px;top:626px;">12529</div>
<div class="cell" style="left:813px;top:626px;">28022025</div>
<svg style="left:898px;top:623px" width="17" height="17" viewBox="0 0 17 17"><rect x="1" y="3.1" width="10.9" height="1.8" fill="#80858a"/><rect x="1" y="3.1" width="1.3" height="10.8" fill="#80858a"/><rect x="11.1" y="3.1" width="0.9" height="2.6" fill="#80858a"/><rect x="3" y="1" width="1.9" height="2.3" fill="#80858a"/><rect x="8.1" y="1" width="1.9" height="2.3" fill="#80858a"/><rect x="1" y="12.7" width="4.7" height="1.2" fill="#80858a"/><path d="M3.6 7.4 L4.9 6.6 V11" fill="none" stroke="#80858a" stroke-width="1.2"/><circle cx="12" cy="11.9" r="4.9" fill="#80858a"/><path d="M10.1 10.1 L11.9 12.2 L14.9 12.5" fill="none" stroke="#eef0f2" stroke-width="0.9"/></svg>
<div class="cell" style="left:946px;top:626px;">30032025</div>
<svg style="left:1023px;top:623px" width="17" height="17" viewBox="0 0 17 17"><rect x="1" y="3.1" width="10.9" height="1.8" fill="#80858a"/><rect x="1" y="3.1" width="1.3" height="10.8" fill="#80858a"/><rect x="11.1" y="3.1" width="0.9" height="2.6" fill="#80858a"/><rect x="3" y="1" width="1.9" height="2.3" fill="#80858a"/><rect x="8.1" y="1" width="1.9" height="2.3" fill="#80858a"/><rect x="1" y="12.7" width="4.7" height="1.2" fill="#80858a"/><path d="M3.6 7.4 L4.9 6.6 V11" fill="none" stroke="#80858a" stroke-width="1.2"/><circle cx="12" cy="11.9" r="4.9" fill="#80858a"/><path d="M10.1 10.1 L11.9 12.2 L14.9 12.5" fill="none" stroke="#eef0f2" stroke-width="0.9"/></svg>
<div class="cell" style="left:1071px;top:626px;">28022025</div>
<svg style="left:1140px;top:623px" width="17" height="17" viewBox="0 0 17 17"><rect x="1" y="3.1" width="10.9" height="1.8" fill="#80858a"/><rect x="1" y="3.1" width="1.3" height="10.8" fill="#80858a"/><rect x="11.1" y="3.1" width="0.9" height="2.6" fill="#80858a"/><rect x="3" y="1" width="1.9" height="2.3" fill="#80858a"/><rect x="8.1" y="1" width="1.9" height="2.3" fill="#80858a"/><rect x="1" y="12.7" width="4.7" height="1.2" fill="#80858a"/><path d="M3.6 7.4 L4.9 6.6 V11" fill="none" stroke="#80858a" stroke-width="1.2"/><circle cx="12" cy="11.9" r="4.9" fill="#80858a"/><path d="M10.1 10.1 L11.9 12.2 L14.9 12.5" fill="none" stroke="#eef0f2" stroke-width="0.9"/></svg>
<div class="cell" style="left:1188px;top:626px;width:97px;text-align:right">0.00</div>
<div style="left:36px;top:662px;width:13px;height:13px;background:#fff;border:1px solid #6c6c6c;border-radius:2px"></div>
<div class="cell" style="left:76px;top:661px;">N</div>
<div class="cell" style="left:131px;top:661px;">O</div>
<div class="cell" style="left:186px;top:661px;">001ST</div>
<div class="cell" style="left:319px;top:661px;">Sysco Pvt.ltd</div>
<div class="cell" style="left:452px;top:661px;">No Job</div>
<div class="cell" style="left:551px;top:661px;">1486</div>
<div class="cell" style="left:813px;top:661px;">28022025</div>
<svg style="left:898px;top:658px" width="17" height="17" viewBox="0 0 17 17"><rect x="1" y="3.1" width="10.9" height="1.8" fill="#80858a"/><rect x="1" y="3.1" width="1.3" height="10.8" fill="#80858a"/><rect x="11.1" y="3.1" width="0.9" height="2.6" fill="#80858a"/><rect x="3" y="1" width="1.9" height="2.3" fill="#80858a"/><rect x="8.1" y="1" width="1.9" height="2.3" fill="#80858a"/><rect x="1" y="12.7" width="4.7" height="1.2" fill="#80858a"/><path d="M3.6 7.4 L4.9 6.6 V11" fill="none" stroke="#80858a" stroke-width="1.2"/><circle cx="12" cy="11.9" r="4.9" fill="#80858a"/><path d="M10.1 10.1 L11.9 12.2 L14.9 12.5" fill="none" stroke="#eef0f2" stroke-width="0.9"/></svg>
<div class="cell" style="left:946px;top:661px;">30032025</div>
<svg style="left:1023px;top:658px" width="17" height="17" viewBox="0 0 17 17"><rect x="1" y="3.1" width="10.9" height="1.8" fill="#80858a"/><rect x="1" y="3.1" width="1.3" height="10.8" fill="#80858a"/><rect x="11.1" y="3.1" width="0.9" height="2.6" fill="#80858a"/><rect x="3" y="1" width="1.9" height="2.3" fill="#80858a"/><rect x="8.1" y="1" width="1.9" height="2.3" fill="#80858a"/><rect x="1" y="12.7" width="4.7" height="1.2" fill="#80858a"/><path d="M3.6 7.4 L4.9 6.6 V11" fill="none" stroke="#80858a" stroke-width="1.2"/><circle cx="12" cy="11.9" r="4.9" fill="#80858a"/><path d="M10.1 10.1 L11.9 12.2 L14.9 12.5" fill="none" stroke="#eef0f2" stroke-width="0.9"/></svg>
<div class="cell" style="left:1071px;top:661px;">28022025</div>
<svg style="left:1140px;top:658px" width="17" height="17" viewBox="0 0 17 17"><rect x="1" y="3.1" width="10.9" height="1.8" fill="#80858a"/><rect x="1" y="3.1" width="1.3" height="10.8" fill="#80858a"/><rect x="11.1" y="3.1" width="0.9" height="2.6" fill="#80858a"/><rect x="3" y="1" width="1.9" height="2.3" fill="#80858a"/><rect x="8.1" y="1" width="1.9" height="2.3" fill="#80858a"/><rect x="1" y="12.7" width="4.7" height="1.2" fill="#80858a"/><path d="M3.6 7.4 L4.9 6.6 V11" fill="none" stroke="#80858a" stroke-width="1.2"/><circle cx="12" cy="11.9" r="4.9" fill="#80858a"/><path d="M10.1 10.1 L11.9 12.2 L14.9 12.5" fill="none" stroke="#eef0f2" stroke-width="0.9"/></svg>
<div class="cell" style="left:1188px;top:661px;width:97px;text-align:right">0.00</div>
<div style="left:1532px;top:336px;width:13px;height:350px;background:#fbfcfd"></div>
<div style="left:1533px;top:290px;width:12px;height:46px;background:#fbfcfd"></div>
<svg style="left:1535px;top:342px" width="9" height="6" viewBox="0 0 9 6"><path d="M0 6 H9 L4.5 0Z" fill="#888"/></svg>
<div style="left:1535px;top:354px;width:9px;height:17px;background:#8a8a8a;border-radius:4.5px"></div>
<svg style="left:1535px;top:674px" width="9" height="6" viewBox="0 0 9 6"><path d="M0 0 H9 L4.5 6Z" fill="#888"/></svg>
<div style="left:2px;top:686px;width:1543px;height:15px;background:#fcfcfd"></div>
<div style="left:2px;top:686px;width:25px;height:15px;background:#f6f8fc"></div>
<div style="left:2px;top:701px;width:1543px;height:1px;background:#d5dfeb"></div>
<svg style="left:34px;top:689px" width="6" height="9" viewBox="0 0 6 9"><path d="M6 0 V9 L0 4.5Z" fill="#888"/></svg>
<div style="left:46px;top:689px;width:934px;height:9px;background:#8a8a8a;border-radius:4.5px"></div>
<svg style="left:1520px;top:689px" width="6" height="9" viewBox="0 0 6 9"><path d="M0 0 V9 L6 4.5Z" fill="#888"/></svg>
<div style="left:1px;top:702px;width:1544px;height:101px;background:#fbfbfb"></div>
<div class="lbl" style="left:41px;top:720px;">Remittance Description</div>
<div class="inp" style="left:181px;top:714px;width:781px;height:24px;"></div>
<div class="lbl" style="left:103px;top:749px;">Status Name</div>
<div class="ro" style="left:181px;top:743px;width:141px;height:24px;"></div>
<div class="cell" style="left:187px;top:748px;">Normal</div>
<div class="lbl" style="left:332px;top:749px;">Draw</div>
<div class="inp" style="left:367px;top:743px;width:141px;height:24px;"></div>
<div class="btn" style="left:518px;top:743px;width:80px;height:24px;"><span style="position:static;line-height:22px">Compliance</span></div>
<div class="btn" style="left:608px;top:743px;width:79px;height:24px;"><span style="position:static;line-height:22px">Joint Payee</span></div>
<div class="lbl" style="left:142px;top:781px;">Notes</div>
<div class="inp" style="left:181px;top:772px;width:501px;height:30px;"></div>
<svg style="left:672px;top:792px" width="9" height="9" viewBox="0 0 9 9"><path d="M8 1 L1 8 M8 5 L5 8" stroke="#888" stroke-width="1"/></svg>
<div style="left:1px;top:285px;width:1px;height:518px;background:#fff"></div>
<div style="left:1px;top:802px;width:1544px;height:1px;background:#fff"></div>
</body></html>
